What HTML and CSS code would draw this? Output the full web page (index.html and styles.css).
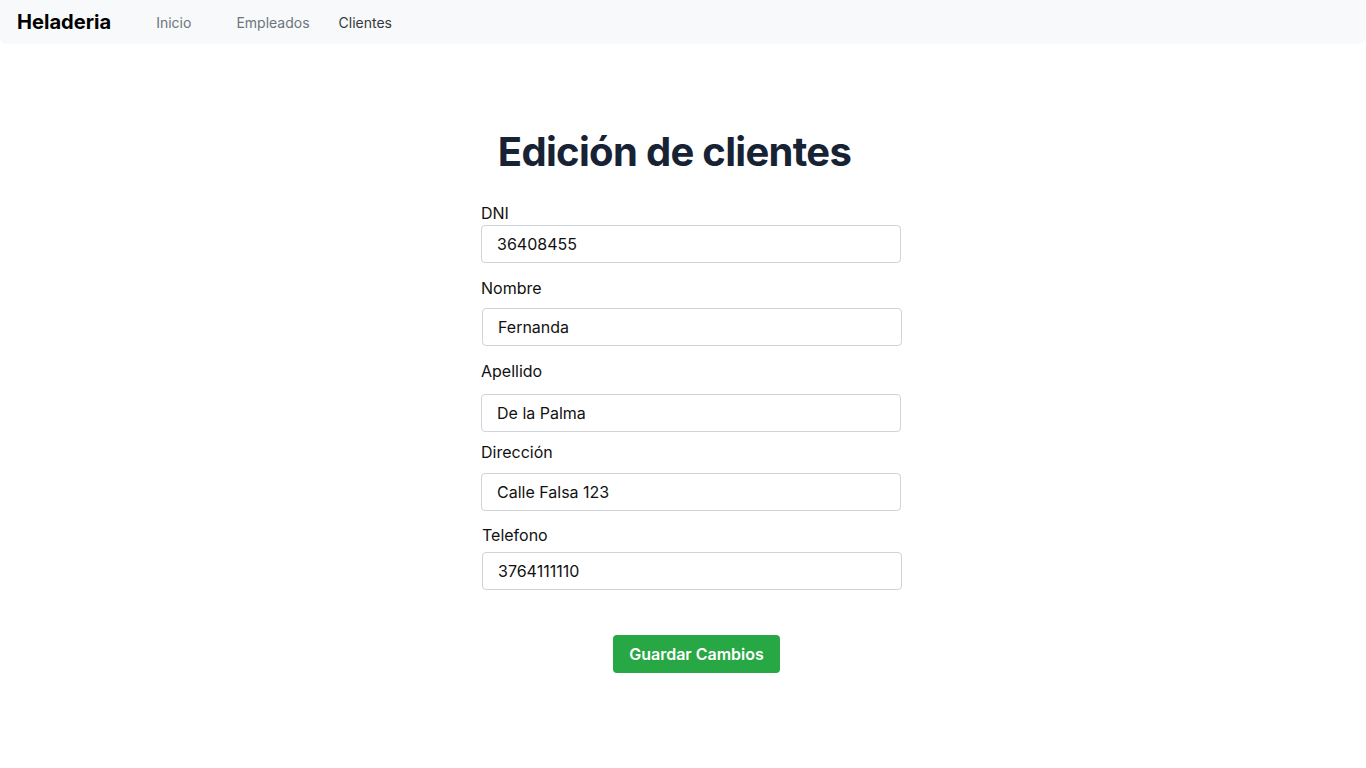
FILE: index.html
```html
<!DOCTYPE html>
<html lang="es">
<head>
<meta charset="utf-8">
<title>Heladeria</title>
<link rel="stylesheet" href="styles.css">
</head>
<body>
<nav class="navbar">
  <a class="brand" href="#">Heladeria</a>
  <a class="nav-link" href="#">Inicio</a>
  <a class="nav-link" href="#">Empleados</a>
  <a class="nav-link active" href="#">Clientes</a>
</nav>
<main class="page">
  <h1 class="title">Edición de clientes</h1>
  <form class="form">
    <label class="label l-dni">DNI</label>
    <input class="input" type="text" value="36408455">
    <label class="label l-nombre">Nombre</label>
    <input class="input shift i-nombre" type="text" value="Fernanda">
    <label class="label l-apellido">Apellido</label>
    <input class="input i-apellido" type="text" value="De la Palma">
    <label class="label l-direccion">Dirección</label>
    <input class="input i-direccion" type="text" value="Calle Falsa 123">
    <label class="label shift l-telefono">Telefono</label>
    <input class="input shift i-telefono" type="text" value="3764111110">
    <div class="actions">
      <button class="btn" type="button">Guardar Cambios</button>
    </div>
  </form>
</main>
</body>
</html>
```
FILE: styles.css
```css
* { box-sizing: border-box; }
html, body { margin: 0; padding: 0; background: #fff; }
body { font-family: Inter, "Noto Sans", sans-serif; color: #000; }

.navbar {
  height: 44px;
  margin-right: 1px;
  background: #f8f9fa;
  border-radius: 0 0 6px 6px;
  display: flex;
  align-items: center;
  padding-left: 17px;
}
.brand {
  font-size: 20.1px;
  font-weight: 700;
  color: #000;
  text-decoration: none;
  margin-right: 45px;
}
.nav-link {
  font-size: 14px;
  color: #6c757d;
  text-decoration: none;
  margin-right: 29px;
}
.nav-link.active { color: #343a40; }
.nav-link:nth-of-type(2) { margin-right: 45px; }

.page {
  display: flex;
  flex-direction: column;
  align-items: center;
}
.title {
  margin: 84px 0 0 -17px;
  font-size: 40px;
  line-height: 48px;
  font-weight: 700;
  color: #172334;
  letter-spacing: -0.7px;
}
.form {
  width: 422px;
  margin: 25px 0 0 18px;
  display: flex;
  flex-direction: column;
}
.label {
  display: block;
  font-size: 16px;
  line-height: 24px;
  color: #111;
}
.input {
  width: 420px;
  height: 38px;
  border: 1px solid #ced4da;
  border-radius: 4px;
  padding: 0 15px;
  font-family: Inter, "Noto Sans", sans-serif;
  font-size: 16px;
  color: #111;
  background: #fff;
}
.shift { margin-left: 1px; }
.l-dni { margin-top: 0; margin-bottom: 0; }
.l-nombre { margin-top: 13px; margin-bottom: 8px; }
.l-apellido { margin-top: 13px; margin-bottom: 11px; }
.l-direccion { margin-top: 8px; margin-bottom: 9px; }
.l-telefono { margin-top: 12px; margin-bottom: 5px; }
.actions {
  display: flex;
  justify-content: center;
  margin-top: 45px;
  padding-left: 9px;
}
.btn {
  height: 38px;
  padding: 0 16px;
  border: none;
  border-radius: 4px;
  background: #28a745;
  color: #fff;
  font-family: Inter, "Noto Sans", sans-serif;
  font-size: 16px;
  font-weight: 600;
}
```
